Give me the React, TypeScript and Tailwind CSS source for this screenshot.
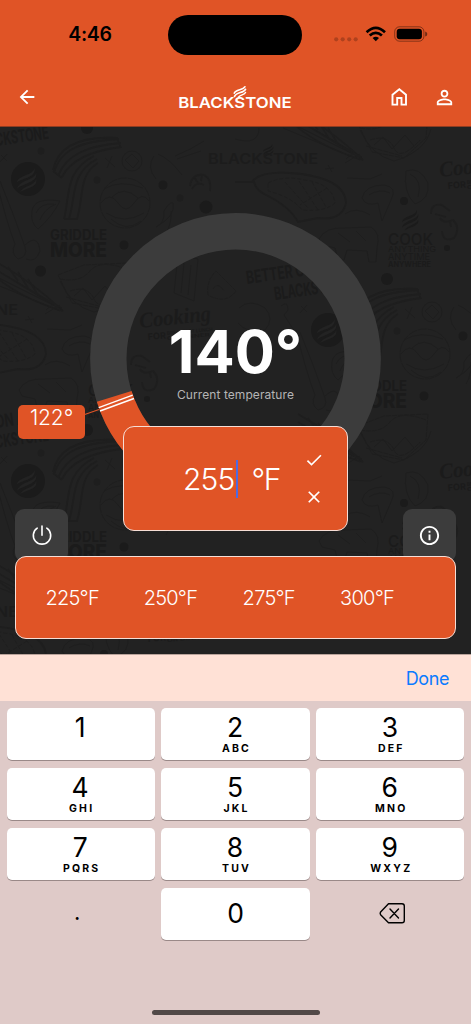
import React from "react";
import { MdArrowBack, MdPersonOutline, MdCheck, MdClose, MdOutlineInfo } from "react-icons/md";

const TILE_OFFSETS: [number, number][] = [
  [0, 0], [0, 302],
  [300, 151], [300, -151],
  [-300, 151], [-300, -151], [-300, 453],
];

function Flames({ x, y, s, fill }: { x: number; y: number; s: number; fill: string }) {
  return (
    <g transform={`translate(${x} ${y}) scale(${s})`} fill={fill}>
      <path d="M0 9 C1 4 10 5 11 0 C12 6 4 6 0 9Z" />
      <path d="M0 13 C2 7 11 8 12 3 C13 9 5 9 0 13Z" />
      <path d="M2 15 C4 11 11 11 12 7 C13 12 7 12 2 15Z" />
    </g>
  );
}

function Motif({ showTop }: { showTop: boolean }) {
  return (
    <g>
      <g fill="none" stroke="#1e1e1e" strokeWidth="1">
        <path d="M54 172 C60 148 82 140 119 138 M58 175 C66 154 86 145 121 142 M62 176 C70 160 88 150 121 146 M53 169 C58 145 80 135 117 137 L121 147 M53 170 L62 177" strokeWidth="1.800" />
        <path d="M64 218 C70 196 64 170 94 155 M69 218 C76 196 70 172 97 158 M77 218 C84 196 78 174 98 162 M64 218 H78" strokeWidth="1.800" />
        <circle cx="125" cy="202" r="25" strokeDasharray="9 1" />
        <path d="M101 202 Q110 190 118 202 T134 202 T149 200 M104 188 Q120 178 143 187 M106 212 Q124 224 144 212 M112 196 Q124 184 138 197 M111 218 Q126 232 141 220" />
        <path d="M32 210 Q34 196 60 200 Q52 216 38 228 Q30 222 32 210Z M36 212 Q40 202 54 203 M40 219 Q44 208 56 203" />
        <circle cx="132" cy="160" r="10" />
        <path d="M125 159 L132 153 L139 160 L133 167Z M105 157 L115 166 M112 155 L107 167" />
        <path d="M154 155 Q146 166 156 178 M158 153 Q170 158 182 174 M175 155 Q192 148 204 140 M177 158 L201 150" />
        <path d="M190 185 Q192 172 204 174 Q212 178 210 190 M192 188 Q196 180 204 184 M194 176 L198 182 M202 174 L201 180" strokeWidth="1.800" />
        <path d="M156 226 Q165 222 164 210 Q170 200 173 202 Q176 215 156 226Z M166 232 Q172 222 171 210" />
        <path d="M-4 178 Q6 220 15 243 Q10 252 18 258 Q28 256 25 246 Q14 214 0 180 M25 244 Q38 232 40 250 Q36 262 26 258" />
        <path d="M-2 262 Q34 282 63 310 Q22 298 -4 276 M-2 270 L54 304 M8 266 L18 280 M18 271 L28 287 M28 278 L38 294" strokeWidth="1.500" />
        <path d="M58 274 L84 264 L128 262 L126 288 L104 308 L72 302Z M60 278 Q80 282 90 270 T126 268 M70 290 Q88 284 94 298 T120 290 M66 296 L102 306" strokeDasharray="5 1" />
        <path d="M174 292 L178 254 L198 258 L194 300Z M181 292 L184 262 M188 294 L191 264" />
        <path d="M208 294 Q206 280 216 270 L236 290 Q226 304 208 294Z M213 288 Q218 280 224 290" strokeDasharray="4 1" />
        <path d="M235 181 H252 Q260 170 290 172 Q345 176 346 202 Q342 220 318 217 L298 221 Q290 206 268 195 Q256 190 254 181Z" strokeWidth="1.800" />
        <path d="M268 182 Q284 174 304 179 Q332 182 335 202 Q325 211 302 209 Q292 196 268 190Z M285 181 L308 207 M299 180 L318 209 M312 181 L326 206 M327 187 L300 204" strokeDasharray="4 2" />
        <path d="M362 197 Q365 184 384 184 Q398 186 391 199 L382 220 L378 202 Q366 206 362 197Z M369 194 Q380 187 390 192 M347 177 L370 178 L382 173 M345 213 Q356 205 370 214" />
        <path d="M319 238 Q325 226 345 227 L371 226 Q381 232 377 247 L376 261 L369 261 L367 250 L347 249 L344 259 L338 259 L335 247 L322 244Z M338 232 L350 241 M356 230 L366 240" />
        <path d="M406 170 Q420 165 428 182 Q430 198 415 203 Q403 192 406 170 M410 173 Q423 179 418 196" />
        <path d="M431 213 Q431 202 442 204 L450 210 M440 217 Q443 223 453 219 Q461 227 454 237 Q443 242 442 230 M435 213 L446 216 M450 220 L451 226" strokeWidth="1.800" />
        <path d="M235 138 Q259 145 259 127 M283 127 L360 159 M297 125 L363 158 M312 127 L362 156 M360 129 Q371 154 394 160 Q425 151 431 128 M374 144 L383 136 L392 148 L405 134 L414 145" />
        <path d="M325 168 L334 167 M328 164 L332 171 M346 158 L354 151 M345 162 L360 153" />
        <path d="M239 307 Q250 297 265 307 Q275 318 265 329 Q247 333 238 322 M281 305 Q288 299 288 309 L284 314 L295 331 M301 305 L307 311 M307 304 L300 312" />
      </g>
      <g fill="#1b1b1b">
        <circle cx="28" cy="178" r="17" />
        <circle cx="163" cy="184" r="4.500" />
        <circle cx="206" cy="206" r="6.500" />
        <circle cx="124" cy="244" r="4.500" />
        <circle cx="40.500" cy="270" r="5.500" />
        <circle cx="97" cy="179" r="3.500" fill="#1e1e1e" />
        <circle cx="180" cy="197" r="3.500" fill="#1e1e1e" />
        <circle cx="41" cy="150" r="3.500" fill="#1e1e1e" />
        <circle cx="404" cy="200" r="4" />
        <circle cx="387" cy="278" r="6" />
        <circle cx="447" cy="247" r="3" />
      </g>
      <Flames x={17} y={167} s={1.6} fill="#232323" />
      <Flames x={402} y={209} s={1.35} fill="#1b1b1b" />
      <Flames x={263} y={143} s={0.85} fill="#1b1b1b" />
      <g fill="#1b1b1b" fontFamily="Inter, sans-serif" fontWeight="700">
        {showTop && (
          <>
            <text x="208" y="163" fill="#1c1c1c" fontSize="14" fontWeight="600" textLength="110" lengthAdjust="spacingAndGlyphs">BLACKSTONE</text>
            <text x="50" y="238.500" fontSize="14" textLength="57" lengthAdjust="spacingAndGlyphs">GRIDDLE</text>
            <text x="50" y="256" fontSize="20" fontWeight="800" textLength="57" lengthAdjust="spacingAndGlyphs">MORE</text>
            <text x="388" y="244" fontSize="16" fontWeight="500" textLength="45" lengthAdjust="spacingAndGlyphs">COOK</text>
            <text x="388" y="251" fontSize="8" fontWeight="400" textLength="48" lengthAdjust="spacingAndGlyphs">ANYTHING</text>
            <text x="388" y="259" fontSize="9" fontWeight="400" textLength="42" lengthAdjust="spacingAndGlyphs">ANYTIME</text>
            <text x="388" y="266" fontSize="7" textLength="43" lengthAdjust="spacingAndGlyphs">ANYWHERE</text>
          </>
        )}
        <text transform="translate(247 283) rotate(-8)" fontSize="18" textLength="80" lengthAdjust="spacingAndGlyphs">BETTER ON A</text>
        <text transform="translate(275 299) rotate(-8)" fontSize="18" textLength="75" lengthAdjust="spacingAndGlyphs">BLACKSTONE</text>
        <text transform="translate(140 327) rotate(-6)" fontFamily="Liberation Serif, serif" fontStyle="italic" fontSize="22" textLength="72" lengthAdjust="spacingAndGlyphs">Cooking</text>
        <text transform="translate(148 339) rotate(-5)" fontSize="9">FOR</text>
        <text transform="translate(167 334) rotate(-5)" fontSize="5" textLength="46" lengthAdjust="spacingAndGlyphs">BREAKFAST LUNCH</text>
        <text transform="translate(167 339) rotate(-5)" fontSize="5" textLength="43" lengthAdjust="spacingAndGlyphs">OR DINNER</text>
      </g>
    </g>
  );
}

function Backdrop() {
  return (
    <svg className="absolute inset-0" width="471" height="528" viewBox="0 126 471 528" aria-hidden="true">
      {TILE_OFFSETS.map(([dx, dy]) => (
        <g key={`${dx},${dy}`} transform={`translate(${dx} ${dy})`}>
          <Motif showTop={dy > -151} />
        </g>
      ))}
    </svg>
  );
}

function StatusBar() {
  return (
    <div className="grid h-[69px] grid-cols-[168px_134px_169px] items-center">
      <div className="pl-[12px] text-center text-[19.500px] leading-none font-semibold tracking-[-0.3px] text-black">4:46</div>
      <div className="h-10 rounded-full bg-black" />
      <svg width="169" height="40" viewBox="302 15 169 40">
        <g fill="#000" fillOpacity="0.22">
          <circle cx="336.200" cy="39.300" r="2.100" />
          <circle cx="342.700" cy="39.300" r="2.100" />
          <circle cx="349.200" cy="39.300" r="2.100" />
          <circle cx="355.700" cy="39.300" r="2.100" />
        </g>
        <g fill="none" stroke="#000" strokeWidth="2.700">
          <path d="M366.600 32.200 Q375.800 23.700 385 32.200" />
          <path d="M369.700 35.600 Q375.800 30 381.900 35.600" />
        </g>
        <path d="M372.600 38 Q375.800 35.300 379 38 L375.800 41.300Z" fill="#000" />
        <rect x="394.700" y="26.800" width="29.200" height="14.400" rx="4.800" fill="none" stroke="#000" strokeOpacity="0.4" />
        <rect x="396.700" y="28.700" width="25.200" height="10.600" rx="3" fill="#000" />
        <path d="M425.200 31.500 Q427.300 32 427.300 34 Q427.300 36 425.200 36.500Z" fill="#000" fillOpacity="0.5" />
      </svg>
    </div>
  );
}

function Header() {
  return (
    <header className="h-[127px] shrink-0 border-b border-[#8f3c21] bg-[#e05426]">
      <StatusBar />
      <div className="flex h-[56px] items-center text-white">
        <MdArrowBack className="ml-[16px] size-[22px]" />
        <svg className="ml-[140px]" width="115" height="30" viewBox="178 82 115 30">
          <text x="178.200" y="108" fill="#fff" fontFamily="Inter, sans-serif" fontSize="15" fontWeight="600" textLength="113.500" lengthAdjust="spacingAndGlyphs">BLACKSTONE</text>
          <g fill="none" stroke="#fff" strokeLinecap="round">
            <path d="M234.200 93.300 C235.500 89 243 90.500 245 86.700" strokeWidth="1.500" />
            <path d="M234.500 96.500 C236 91.800 243.500 93.300 245.500 89.300" strokeWidth="1.700" />
            <path d="M238.500 97.200 C240 94.500 244.500 95.200 245.500 92.500" strokeWidth="1.500" />
          </g>
        </svg>
        <svg className="ml-[95px]" width="22" height="22" viewBox="0 0 22 22" fill="none" stroke="#fff" strokeWidth="1.900">
          <path d="M4.500 8.700 L11.300 3.200 L18 8.700 V18.600 H13.500 V12 H9.200 V18.600 H4.500Z" />
        </svg>
        <MdPersonOutline className="ml-[23px] size-[23px]" />
      </div>
    </header>
  );
}

function Gauge() {
  return (
    <div className="relative grid h-[291px] w-full">
      <svg className="col-start-1 row-start-1" width="471" height="291" viewBox="0 213 471 291">
        <circle cx="235.500" cy="358.500" r="127.200" fill="none" stroke="#3c3c3c" strokeWidth="36.400" />
        <path d="M114.200 396.400 A127.200 127.200 0 0 0 235.500 485.700" fill="none" stroke="#e05426" strokeWidth="36.400" />
        <path d="M84 414.700 L99 409.500" stroke="#e05426" strokeWidth="1.100" />
        <path d="M98.700 407.700 L132.700 395.200 M100 411 L134 398.500" stroke="#fff" strokeWidth="1.400" />
      </svg>
      <div className="relative col-start-1 row-start-1 flex flex-col items-center pt-[108px]">
        <div className="text-[59.500px] leading-[60px] font-bold tracking-[0px] text-white">140°</div>
        <div className="mt-[6px] text-[12px] leading-4 tracking-[0.080px] text-[#b5b5b5]">Current temperature</div>
      </div>
      <div className="absolute top-[192px] left-[18px] h-[34px] w-[67px] rounded-[5px] bg-[#e05426] text-center text-[21px] leading-[26px] font-[350] tracking-[-0.100px] text-white">
        122°
      </div>
    </div>
  );
}

const PRESETS = ["225°F", "250°F", "275°F", "300°F"];

function Main() {
  return (
    <main className="relative h-[527px] shrink-0 overflow-hidden bg-[#222222]">
      <Backdrop />
      <div className="relative pt-[86px]">
        <Gauge />
        <div className="mt-[5px] flex justify-between px-[15px] text-white">
          <div className="flex size-[53px] items-center justify-center rounded-[9px] bg-[#3c3c3c]">
            <svg className="-mt-[2px]" width="22" height="22" viewBox="0 0 22 22" fill="none" stroke="#fff" strokeWidth="1.600" strokeLinecap="round">
              <path d="M11 2 V11.200 M6.200 4.200 A8.700 8.700 0 1 0 15.800 4.200" />
            </svg>
          </div>
          <div className="flex size-[53px] items-center justify-center rounded-[9px] bg-[#3c3c3c]">
            <MdOutlineInfo className="-mt-[1px] size-[23px]" />
          </div>
        </div>
      </div>
      <div className="absolute top-[299px] left-[123px] flex h-[105px] w-[225px] rounded-[11px] border border-[#f6ded6] bg-[#e05426] text-white">
        <div className="flex h-[104px] items-center pl-[59px] text-[30px] font-[350]">
          <span className="w-[53px] tracking-[-0.9px]">255</span>
          <span className="h-[38px] w-[1.500px] bg-[#4e6ae0]" />
          <span className="ml-[14px] tracking-[-1.400px]">°F</span>
        </div>
        <div className="ml-auto flex flex-col items-center gap-[17px] pt-[23px] pr-[23px]">
          <MdCheck className="size-5" />
          <MdClose className="size-5" />
        </div>
      </div>
      <div className="absolute top-[429px] left-[15px] flex h-[83px] w-[441px] items-center rounded-[11px] border border-[#f6ded6] bg-[#e05426] pl-[7px] text-[20px] font-[350] text-white">
        {PRESETS.map((preset) => (
          <span key={preset} className="w-[98.300px] text-center tracking-[-0.750px]">{preset}</span>
        ))}
      </div>
    </main>
  );
}

const KEYS: [string, string][] = [
  ["1", ""], ["2", "ABC"], ["3", "DEF"],
  ["4", "GHI"], ["5", "JKL"], ["6", "MNO"],
  ["7", "PQRS"], ["8", "TUV"], ["9", "WXYZ"],
];

function Keypad() {
  return (
    <section className="relative flex-1 bg-[#dfcac8] px-[6.500px] pt-[7px] text-black">
      <div className="grid grid-cols-3 gap-x-[6.500px] gap-y-2">
        {KEYS.map(([digit, letters]) => (
          <button key={digit} className="flex h-[52px] flex-col items-center rounded-[5px] bg-white pt-[4px] shadow-[0_1px_0_#9a8988]">
            <span className="pr-[1px] text-[26.500px] leading-[31px]">{digit}</span>
            <span className="pl-[2px] text-[10.500px] leading-[12px] font-bold tracking-[2.200px]">{letters}</span>
          </button>
        ))}
        <div className="flex h-[52px] items-center justify-center pr-[7px] pb-[3px] text-[22px]">.</div>
        <button className="flex h-[52px] items-center justify-center rounded-[5px] bg-white pb-[1px] text-[26.500px] shadow-[0_1px_0_#9a8988]">0</button>
        <div className="flex h-[52px] items-center justify-center pl-[4px]">
          <svg width="28" height="24" viewBox="0 0 28 24" fill="none" stroke="#000" strokeWidth="1.400" strokeLinecap="round" strokeLinejoin="round">
            <path d="M10.500 1.800 H24 Q26.300 1.800 26.300 4 V18.500 Q26.300 20.700 24 20.700 H10.500 L2.600 12.800 Q1.700 11.400 2.600 10 L10.500 1.800Z M12 7 L20.500 16 M20.500 7 L12 16" />
          </svg>
        </div>
      </div>
      <div className="absolute bottom-[9px] left-[152px] h-[5px] w-[168px] rounded-full bg-[#514948]" />
    </section>
  );
}

export default function App() {
  return (
    <div className="flex h-[1024px] w-[471px] flex-col overflow-hidden font-[Inter,sans-serif]">
      <Header />
      <Main />
      <div className="flex h-[47px] shrink-0 items-center justify-end border-t border-[#b9a39b] bg-[#ffe1d6] pr-[22px] text-[18px] tracking-[-0.4px] text-[#0a7aff]">
        Done
      </div>
      <Keypad />
    </div>
  );
}
